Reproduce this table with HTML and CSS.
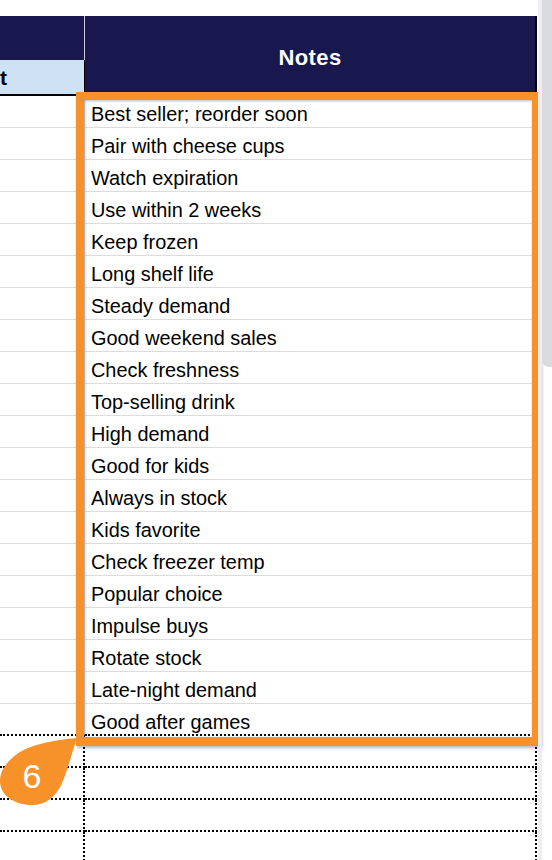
FILE: index.html
```html
<!DOCTYPE html>
<html>
<head>
<meta charset="utf-8">
<link rel="stylesheet" href="styles.css">
</head>
<body>
<div class="page">
  <div class="sheet">
    <div class="spacer"></div>
    <div class="hdr-left">
      <div class="hdr-navy"></div>
      <div class="hdr-blue">t</div>
    </div>
    <div class="hdr-notes">Notes</div>

    <div class="c-left"></div><div class="c-note">Best seller; reorder soon</div>
    <div class="c-left"></div><div class="c-note">Pair with cheese cups</div>
    <div class="c-left"></div><div class="c-note">Watch expiration</div>
    <div class="c-left"></div><div class="c-note">Use within 2 weeks</div>
    <div class="c-left"></div><div class="c-note">Keep frozen</div>
    <div class="c-left"></div><div class="c-note">Long shelf life</div>
    <div class="c-left"></div><div class="c-note">Steady demand</div>
    <div class="c-left"></div><div class="c-note">Good weekend sales</div>
    <div class="c-left"></div><div class="c-note">Check freshness</div>
    <div class="c-left"></div><div class="c-note">Top-selling drink</div>
    <div class="c-left"></div><div class="c-note">High demand</div>
    <div class="c-left"></div><div class="c-note">Good for kids</div>
    <div class="c-left"></div><div class="c-note">Always in stock</div>
    <div class="c-left"></div><div class="c-note">Kids favorite</div>
    <div class="c-left"></div><div class="c-note">Check freezer temp</div>
    <div class="c-left"></div><div class="c-note">Popular choice</div>
    <div class="c-left"></div><div class="c-note">Impulse buys</div>
    <div class="c-left"></div><div class="c-note">Rotate stock</div>
    <div class="c-left"></div><div class="c-note">Late-night demand</div>
    <div class="c-left last"></div><div class="c-note last">Good after games</div>

    <div class="c-left empty"></div><div class="c-note empty"></div>
    <div class="c-left empty"></div><div class="c-note empty"></div>
    <div class="c-left empty"></div><div class="c-note empty"></div>
    <div class="c-left empty"></div><div class="c-note empty"></div>
  </div>

  <div class="highlight"></div>

  <div class="badge">
    <svg class="badge-shape" width="80" height="72" viewBox="0 0 80 72">
      <path d="M77,2 C56,4 31,8 17,18 C5,27 0,36 0,45 C0,59 14,69 32,69 C46,69 56,61 62,47 C67,36 71,20 77,2 Z" fill="#f7922a"/>
    </svg>
    <span class="badge-num">6</span>
  </div>

  <div class="track"></div>
  <div class="thumb"></div>
</div>
</body>
</html>
```

FILE: styles.css
```css
* { box-sizing: border-box; }
html, body {
  margin: 0;
  padding: 0;
  background: #ffffff;
}
body {
  font-family: "Liberation Sans", Arial, sans-serif;
  color: #000;
  width: 552px;
  height: 860px;
  overflow: hidden;
}
.page {
  position: relative;
  width: 552px;
  height: 860px;
  overflow: hidden;
}
.sheet {
  display: grid;
  grid-template-columns: 85px 452px;
  grid-template-rows: 16px 80px;
  grid-auto-rows: 32px;
  width: 537px;
}
.spacer {
  grid-column: 1 / 3;
}
.hdr-left {
  display: flex;
  flex-direction: column;
}
.hdr-navy {
  height: 44px;
  background: #18184f;
  border-right: 1px solid #c9cad6;
}
.hdr-blue {
  height: 36px;
  background: #cfe2f3;
  border-right: 1px solid #000;
  border-bottom: 2px solid #000;
  font-weight: bold;
  font-size: 21px;
  line-height: 36px;
  overflow: hidden;
}
.hdr-notes {
  background: #18184f;
  border-right: 2px solid #000;
  color: #fff;
  font-weight: bold;
  font-size: 22px;
  letter-spacing: 0.4px;
  display: flex;
  align-items: center;
  justify-content: center;
  padding-top: 3px;
}
.c-left {
  border-bottom: 1px solid #dcdcdc;
  border-right: 1px solid #dcdcdc;
}
.c-note {
  border-bottom: 1px solid #dcdcdc;
  font-size: 19.9px;
  line-height: 32px;
  padding-left: 6px;
  padding-top: 2px;
  white-space: nowrap;
}
.c-left.last, .c-note.last {
  border-bottom: 2px dotted #000;
}
.c-left.empty {
  border-bottom: 2px dotted #000;
  border-right: 2px dotted #000;
}
.c-note.empty {
  border-bottom: 2px dotted #000;
  border-right: 2px dotted #000;
}
.highlight {
  position: absolute;
  left: 76px;
  top: 92px;
  width: 465px;
  height: 654px;
  border-style: solid;
  border-color: #f8912a;
  border-width: 8px 9px 9px 8px;
  box-shadow: 1px 2px 3px rgba(0,0,0,0.28), inset 1px 1px 3px rgba(0,0,0,0.28);
}
.badge {
  position: absolute;
  left: 0;
  top: 736px;
  width: 80px;
  height: 72px;
}
.badge-shape {
  display: block;
}
.badge-num {
  position: absolute;
  left: 0;
  top: 21px;
  width: 64px;
  text-align: center;
  color: #fff;
  font-size: 34px;
  line-height: 38px;
}
.track {
  position: absolute;
  left: 538px;
  top: 0;
  width: 4px;
  height: 860px;
  background: #eeeef0;
}
.thumb {
  position: absolute;
  left: 542px;
  top: 0;
  width: 10px;
  height: 367px;
  background: #dadbdf;
  border-bottom-left-radius: 7px;
}
```
